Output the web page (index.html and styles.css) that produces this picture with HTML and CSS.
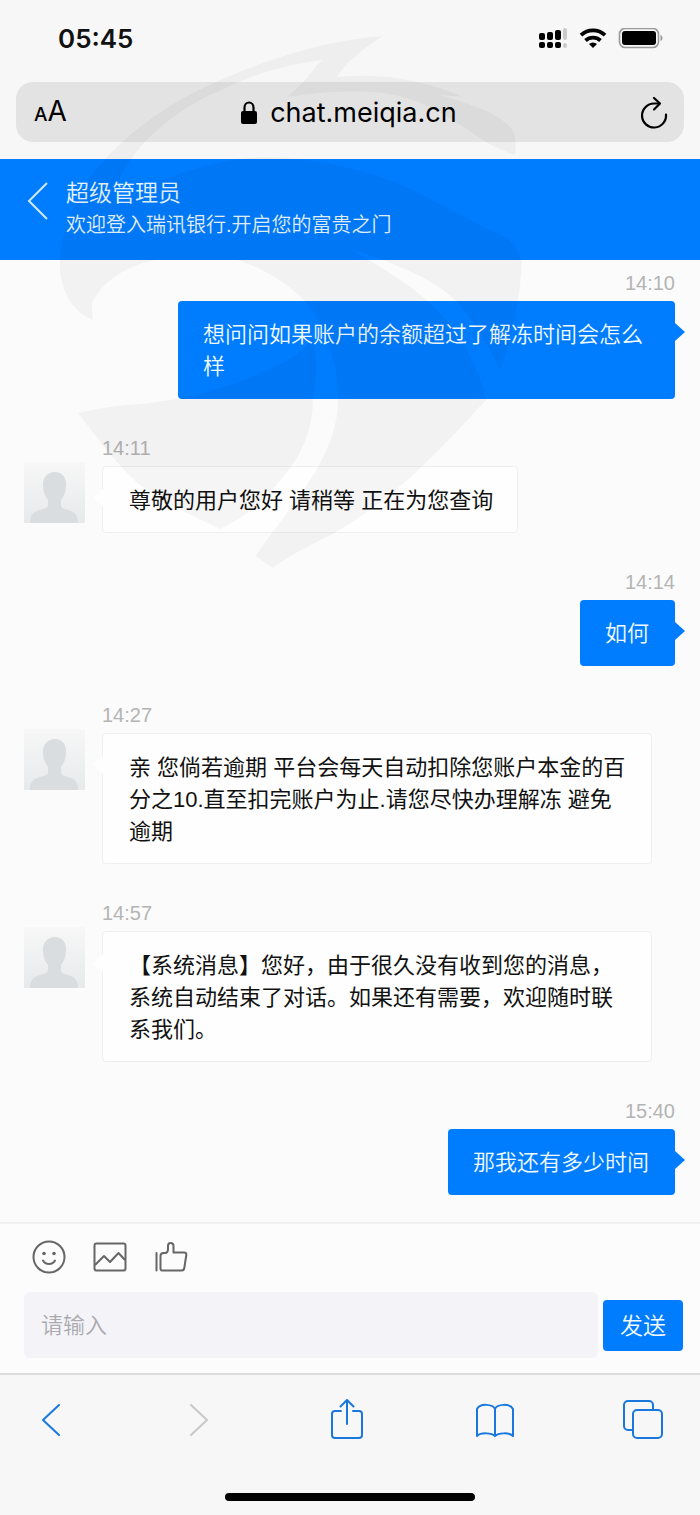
FILE: index.html
```html
<!DOCTYPE html>
<html lang="zh-CN">
<head>
<meta charset="utf-8">
<meta name="viewport" content="width=device-width, initial-scale=1">
<title>超级管理员</title>
<link rel="stylesheet" href="styles.css">
</head>
<body>
<svg class="sprite" aria-hidden="true">
  <defs>
    <linearGradient id="avatar-bg" x1="0" y1="0" x2="0" y2="1">
      <stop offset="0" stop-color="#f7f7f7"/>
      <stop offset="1" stop-color="#e7e9eb"/>
    </linearGradient>
    <symbol id="avatar" viewBox="0 0 61 61">
      <rect width="61" height="61" fill="url(#avatar-bg)"/>
      <path fill="#d9dde0" d="M31 10c7 0 11 5 11 12 0 8-2 12-5 16v5c0 3 3 4 7 5 6 2 10 4 10 13H6c0-9 4-11 10-13 4-1 8-2 8-5v-5c-3-4-5-8-5-16 0-7 5-12 12-12z"/>
    </symbol>
  </defs>
</svg>

<div class="browser-top">
  <div class="status">
    <time class="clock">05:45</time>
    <div class="indicators">
      <svg width="30" height="22" viewBox="0 0 30 22" aria-hidden="true">
        <g fill="#000">
          <rect x="1" y="5" width="6" height="7" rx="2"/><rect x="9" y="4" width="6" height="8" rx="2"/><rect x="17" y="2" width="6" height="10" rx="2"/>
          <rect x="1" y="14" width="6" height="6" rx="2"/><rect x="9" y="14" width="6" height="6" rx="2"/><rect x="17" y="14" width="6" height="6" rx="2"/>
        </g>
        <g fill="#cbcbcb"><rect x="25" y="0" width="4" height="12" rx="2"/><rect x="25" y="15" width="4" height="5" rx="2"/></g>
      </svg>
      <svg width="28" height="22" viewBox="0 0 28 22" aria-hidden="true">
        <g fill="none" stroke="#000" stroke-width="3.8">
          <path d="M2 7.200a17.500 17.500 0 0 1 24 0"/><path d="M6.500 12.500a11 11 0 0 1 15 0"/>
        </g>
        <path d="M14 20l-4-4a6 6 0 0 1 8 0z"/>
      </svg>
      <svg width="46" height="22" viewBox="0 0 46 22" aria-hidden="true">
        <rect x="1.500" y=".5" width="39" height="19" rx="5.500" fill="none" stroke="#999" stroke-width="1.600"/>
        <rect x="4" y="3" width="34" height="14" rx="3"/>
        <path fill="#999" d="M42.500 7c1.500 .5 2 2 2 3s-.5 2.500-2 3z"/>
      </svg>
    </div>
  </div>

  <div class="address">
    <button class="plain text-size" type="button" aria-label="文字大小"><span class="small-a">A</span>A</button>
    <div class="url">
      <svg width="18" height="24" viewBox="0 0 18 24" aria-hidden="true">
        <rect x="1" y="10" width="16" height="13" rx="2"/>
        <path d="M4.500 11V6.500a4.500 5 0 0 1 9 0V11" fill="none" stroke="#000" stroke-width="2.200"/>
      </svg>
      <span>chat.meiqia.cn</span>
    </div>
    <button class="plain" type="button" aria-label="刷新">
      <svg width="28" height="34" viewBox="0 0 28 34" fill="none" stroke="#000" stroke-width="2.200" stroke-linecap="round" stroke-linejoin="round">
        <path d="M26 18.500A12 12 0 1 1 14 7.500h5"/><path d="M14 2l6 5.500-6 6"/>
      </svg>
    </button>
  </div>
</div>

<header class="chat-head">
  <button class="plain" type="button" aria-label="返回">
    <svg width="22" height="38" viewBox="0 0 22 38" fill="none" stroke="#cfe9ff" stroke-width="2"><path d="M21 1L3 19l18 18"/></svg>
  </button>
  <div>
    <h1 class="name">超级管理员</h1>
    <p class="welcome">欢迎登入瑞讯银行.开启您的富贵之门</p>
  </div>
</header>

<main class="chat">
  <article class="msg sent">
    <time>14:10</time>
    <p class="bubble">想问问如果账户的余额超过了解冻时间会怎么样</p>
  </article>
  <article class="msg received">
    <svg class="avatar" role="img" aria-label="客服头像"><use href="#avatar"/></svg>
    <div class="body">
      <time>14:11</time>
      <p class="bubble">尊敬的用户您好 请稍等 正在为您查询</p>
    </div>
  </article>
  <article class="msg sent">
    <time>14:14</time>
    <p class="bubble">如何</p>
  </article>
  <article class="msg received">
    <svg class="avatar" role="img" aria-label="客服头像"><use href="#avatar"/></svg>
    <div class="body">
      <time>14:27</time>
      <p class="bubble">亲 您倘若逾期 平台会每天自动扣除您账户本金的百分之10.直至扣完账户为止.请您尽快办理解冻 避免逾期</p>
    </div>
  </article>
  <article class="msg received">
    <svg class="avatar" role="img" aria-label="客服头像"><use href="#avatar"/></svg>
    <div class="body">
      <time>14:57</time>
      <p class="bubble">【系统消息】您好，由于很久没有收到您的消息，系统自动结束了对话。如果还有需要，欢迎随时联系我们。</p>
    </div>
  </article>
  <article class="msg sent">
    <time>15:40</time>
    <p class="bubble">那我还有多少时间</p>
  </article>
</main>

<form class="composer">
  <div class="tools">
    <button class="plain" type="button" aria-label="表情">
      <svg width="34" height="34" viewBox="0 0 34 34" fill="none" stroke="#666" stroke-width="2" stroke-linecap="round">
        <circle cx="17" cy="17" r="15.500"/><path d="M11 20.500c2.500 4.500 9.500 4.500 12 0"/>
        <circle cx="12" cy="13.500" r="1.800" fill="#666" stroke="none"/><circle cx="22" cy="13.500" r="1.800" fill="#666" stroke="none"/>
      </svg>
    </button>
    <button class="plain" type="button" aria-label="图片">
      <svg width="34" height="34" viewBox="0 0 34 34" fill="none" stroke="#666" stroke-width="2" stroke-linejoin="round">
        <rect x="1.500" y="3.500" width="31" height="27" rx="2"/><path d="M2 25l9-9 6 6 8.500-9L32 20"/>
      </svg>
    </button>
    <button class="plain" type="button" aria-label="点赞">
      <svg width="34" height="34" viewBox="0 0 34 34" fill="none" stroke="#666" stroke-width="2" stroke-linecap="round" stroke-linejoin="round">
        <path d="M2.500 13v17.500"/>
        <path d="M6.500 16c0-2.500 1-3 3-3h1.500c2.500 0 3-1.500 3-4V6c0-2 1-3 2.500-3S19.500 4 19.500 6v6.500h10.500c2 0 2.500 1 2.300 2.500l-2 13c-.3 2-1.300 2.500-2.800 2.500h-19c-1.500 0-2-.5-2-2z"/>
      </svg>
    </button>
  </div>
  <div class="entry">
    <input class="field" type="text" placeholder="请输入" aria-label="请输入">
    <button class="send" type="button">发送</button>
  </div>
</form>

<nav class="browser-bar">
  <div class="nav-row">
    <button class="plain" type="button" aria-label="后退">
      <svg width="42" height="42" viewBox="0 0 42 42"><path d="M29 6L13 21l16 15"/></svg>
    </button>
    <button class="plain off" type="button" aria-label="前进" disabled>
      <svg width="42" height="42" viewBox="0 0 42 42"><path d="M13 6l16 15-16 15"/></svg>
    </button>
    <button class="plain" type="button" aria-label="分享">
      <svg width="42" height="42" viewBox="0 0 42 42"><path d="M15 12H9a3 3 0 0 0-3 3v21a3 3 0 0 0 3 3h24a3 3 0 0 0 3-3V15a3 3 0 0 0-3-3h-6M21 25V1M14.500 7.500L21 1 27.500 7.500"/></svg>
    </button>
    <button class="plain" type="button" aria-label="书签">
      <svg width="42" height="42" viewBox="0 0 42 42"><path d="M21 10c-2-5-15-6-18 0v27c4-4 15-3 18 0 3-3 14-4 18 0V10c-3-6-16-5-18 0v27"/></svg>
    </button>
    <button class="plain" type="button" aria-label="标签页">
      <svg width="42" height="42" viewBox="0 0 42 42"><rect x="11" y="11" width="29" height="28" rx="4"/><path d="M11 31H6a4 4 0 0 1-4-4V6a4 4 0 0 1 4-4h21a4 4 0 0 1 4 4v5"/></svg>
    </button>
  </div>
  <div class="home"></div>
</nav>

<svg class="watermark" width="700" height="600" viewBox="0 0 700 600" aria-hidden="true">
  <path d="M383 36C330 40 275 55 207 86C165 106 130 132 107 157C80 185 62 225 60 259C58 288 72 312 93 320C92 310 90 302 97 295C108 278 130 264 157 260L237 260C270 270 305 295 317 318C333 350 338 375 338 399C338 430 325 460 300 495L255 556L273 568C290 555 310 545 333 534C390 500 420 472 487 399C482 380 470 350 450 324C430 300 405 280 350 249C410 268 440 284 460 305C480 330 490 350 500 370C512 340 520 300 522 261C518 250 515 244 507 238C460 218 410 182 367 173C310 156 260 153 217 163C175 173 145 186 117 204C114 192 120 172 133 157C150 132 185 105 217 92C255 73 290 64 323 60C315 65 313 75 287 97C320 92 350 90 383 93C420 98 440 112 470 131C485 143 500 150 515 155C517 140 515 130 507 124C495 113 475 105 440 95L463 97C430 82 385 72 337 77C345 62 365 48 383 36Z"/>
  <path d="M78 413C100 408 118 405 140 404C180 400 215 392 250 377C280 366 300 355 313 338C318 360 316 380 313 399C313 431 300 460 277 484C262 504 242 519 220 529C190 515 165 503 150 492C130 480 110 455 78 413Z"/>
</svg>
</body>
</html>
```
FILE: styles.css
```css
* {
  box-sizing: border-box;
}

body {
  position: relative;
  display: flex;
  flex-direction: column;
  min-height: 100vh;
  margin: 0;
  background: #fbfbfb;
  color: #111;
  font-family: "Liberation Sans", "Noto Sans CJK SC", sans-serif;
}

h1,
p {
  margin: 0;
  font-weight: 400;
}

svg {
  display: block;
}

.sprite {
  position: absolute;
  width: 0;
  height: 0;
}

.plain {
  padding: 0;
  border: 0;
  background: none;
  color: inherit;
}

.watermark {
  position: absolute;
  top: 0;
  left: 0;
  fill: #000;
  fill-opacity: 0.036;
  pointer-events: none;
}

/* Phone status and address bars */

.browser-top {
  padding-bottom: 17px;
  background: #f7f7f7;
}

.status {
  display: flex;
  align-items: center;
  justify-content: space-between;
  height: 82px;
  padding: 0 36px 4px 58px;
}

.clock {
  font: 600 26px/32px Inter, sans-serif;
}

.indicators {
  display: flex;
  gap: 11px;
}

.address {
  display: flex;
  align-items: center;
  justify-content: space-between;
  height: 60px;
  margin: 0 16px;
  padding: 2px 16px 0 18px;
  border-radius: 17px;
  background: #e3e3e4;
  color: #000;
  font: 400 27px/34px Inter, sans-serif;
}

.text-size {
  font: 400 28px/34px Inter, sans-serif;
}

.small-a {
  font-size: 19px;
  font-weight: 500;
}

.url {
  display: flex;
  align-items: center;
  gap: 12px;
  margin-right: 10px;
}

/* Conversation header */

.chat-head {
  display: flex;
  gap: 18px;
  padding: 17px 26px 20px;
  background: #007dff;
  color: #e8f5ff;
}

.chat-head .plain {
  align-self: flex-start;
  padding-top: 6px;
}

.name {
  font-size: 23px;
  font-weight: 350;
  line-height: 34px;
}

.welcome {
  font-size: 20px;
  font-weight: 350;
  line-height: 30px;
}

/* Messages */

.chat {
  flex: 1;
  display: flex;
  flex-direction: column;
  gap: 37px;
  padding: 11px 25px 27px 24px;
}

.msg time {
  color: #b4b4b4;
  font-size: 20px;
  line-height: 24px;
}

.sent,
.body {
  display: flex;
  flex-direction: column;
  gap: 6px;
}

.sent {
  align-items: flex-end;
}

.received {
  display: flex;
  gap: 17px;
}

.body {
  align-items: flex-start;
}

.avatar {
  flex: none;
  width: 61px;
  height: 61px;
  margin-top: 26px;
}

.bubble {
  position: relative;
  border-radius: 4px;
  font-size: 22px;
  line-height: 32px;
}

.sent .bubble {
  max-width: 497px;
  padding: 18px 26px 16px 25px;
  background: #007dff;
  color: #f2faff;
  font-weight: 350;
}

.received .bubble {
  max-width: 550px;
  padding: 18px 24px 15px 26px;
  border: 1px solid #efefef;
  background: #fefefe;
}

.bubble::after {
  content: "";
  position: absolute;
  top: 22px;
  border: solid transparent;
  border-width: 9px 10px;
}

.sent .bubble::after {
  left: 100%;
  border-left-color: #007dff;
}

.received .bubble::after {
  right: 100%;
  border-right-color: #fefefe;
}

/* Composer */

.composer {
  padding: 16px 17px 15px 24px;
  border-top: 2px solid #f0f0f0;
  background: #fcfcfc;
}

.tools {
  display: flex;
  gap: 27px;
  padding: 0 8px 18px;
}

.entry {
  display: flex;
  align-items: center;
  gap: 5px;
}

.field {
  flex: 1;
  min-width: 0;
  height: 66px;
  padding: 2px 17px 0;
  border: 0;
  border-radius: 6px;
  background: #f4f4f8;
  font: 350 22px/32px "Liberation Sans", "Noto Sans CJK SC", sans-serif;
}

.field::placeholder {
  color: #aaaab0;
}

.send {
  padding: 9px 17px 8px;
  border: 0;
  border-radius: 4px;
  background: #007dff;
  color: #f2faff;
  font: 350 23px/34px "Liberation Sans", "Noto Sans CJK SC", sans-serif;
}

/* Browser toolbar */

.browser-bar {
  padding: 24px 0 14px;
  border-top: 2px solid #dcdcdc;
  background: #f7f7f7;
}

.nav-row {
  display: flex;
  justify-content: space-between;
  padding: 0 36px 0 30px;
}

.nav-row svg {
  fill: none;
  stroke: #1a78dc;
  stroke-width: 2;
  stroke-linecap: round;
  stroke-linejoin: round;
}

.nav-row .off svg {
  stroke: #c8c8c8;
}

.home {
  width: 250px;
  height: 8px;
  margin: 52px auto 0;
  border-radius: 4px;
  background: #000;
}
```
